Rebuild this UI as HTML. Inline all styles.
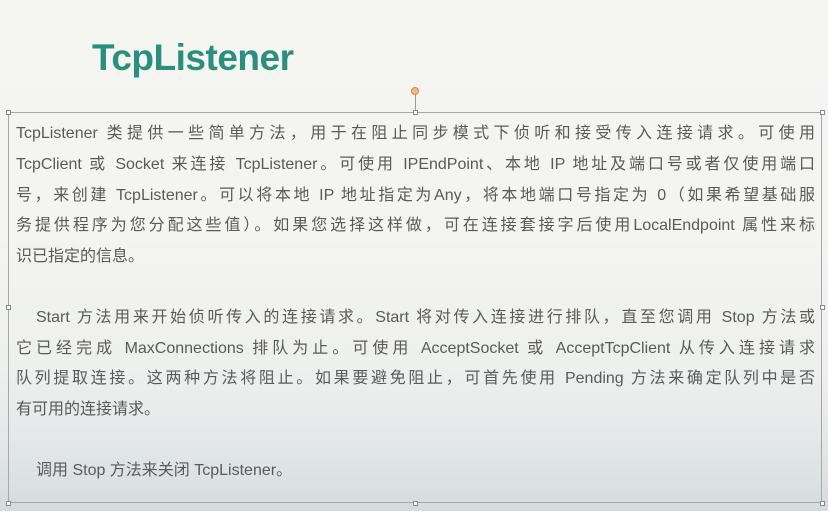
<!DOCTYPE html>
<html><head><meta charset="utf-8"><style>
html,body{margin:0;padding:0}
body{width:828px;height:511px;overflow:hidden;position:relative;
background:linear-gradient(180deg,#f5f5f2 0%,#f4f4f1 45%,#eef0ee 72%,#e4e8e8 86%,#d5dcde 100%);
font-family:"Liberation Sans","Noto Sans CJK SC",sans-serif;}
.title{position:absolute;left:92px;top:36px;font-family:"Liberation Sans",sans-serif;font-weight:bold;font-size:37px;color:#2a8f7c;letter-spacing:-0.5px;line-height:44px}
.box{position:absolute;left:8px;top:112px;width:814px;height:391px;border:1px solid #a8a8a8;box-sizing:border-box}
.h{position:absolute;width:5px;height:5px;border:1px solid #888;background:#fff;box-sizing:border-box}
.l{position:absolute;left:16px;width:799px;font-size:16px;color:#5a5a5a;white-space:nowrap;line-height:20px}
.j{text-align:justify;text-align-last:justify;white-space:normal}
</style></head><body>
<div class="title">TcpListener</div>
<div style="position:absolute;left:415px;top:93px;width:1px;height:19px;background:#999"></div>
<div style="position:absolute;left:411px;top:87px;width:8px;height:8px;border-radius:50%;border:1px solid #d88a40;background:#f4b880;box-sizing:border-box"></div>
<div class="box"></div>
<div class="h" style="left:6px;top:110px"></div>
<div class="h" style="left:413px;top:110px"></div>
<div class="h" style="left:820px;top:110px"></div>
<div class="h" style="left:6px;top:305px"></div>
<div class="h" style="left:820px;top:305px"></div>
<div class="h" style="left:6px;top:501px"></div>
<div class="h" style="left:413px;top:501px"></div>
<div class="h" style="left:820px;top:501px"></div>

<div class="l j" style="top:124px">TcpListener 类提供一些简单方法，用于在阻止同步模式下侦听和接受传入连接请求。可使用</div>
<div class="l j" style="top:155px">TcpClient 或 Socket 来连接 TcpListener。可使用 IPEndPoint、本地 IP 地址及端口号或者仅使用端口</div>
<div class="l j" style="top:186px">号，来创建 TcpListener。可以将本地 IP 地址指定为Any，将本地端口号指定为 0（如果希望基础服</div>
<div class="l j" style="top:216px">务提供程序为您分配这些值）。如果您选择这样做，可在连接套接字后使用LocalEndpoint 属性来标</div>
<div class="l" style="top:247px">识已指定的信息。</div>

<div class="l j" style="top:308px;left:36px;width:779px">Start 方法用来开始侦听传入的连接请求。Start 将对传入连接进行排队，直至您调用 Stop 方法或</div>
<div class="l j" style="top:339px">它已经完成 MaxConnections 排队为止。可使用 AcceptSocket 或 AcceptTcpClient 从传入连接请求</div>
<div class="l j" style="top:369px">队列提取连接。这两种方法将阻止。如果要避免阻止，可首先使用 Pending 方法来确定队列中是否</div>
<div class="l" style="top:400px">有可用的连接请求。</div>

<div class="l" style="top:461px;left:36px">调用 Stop 方法来关闭 TcpListener。</div>
</body></html>
